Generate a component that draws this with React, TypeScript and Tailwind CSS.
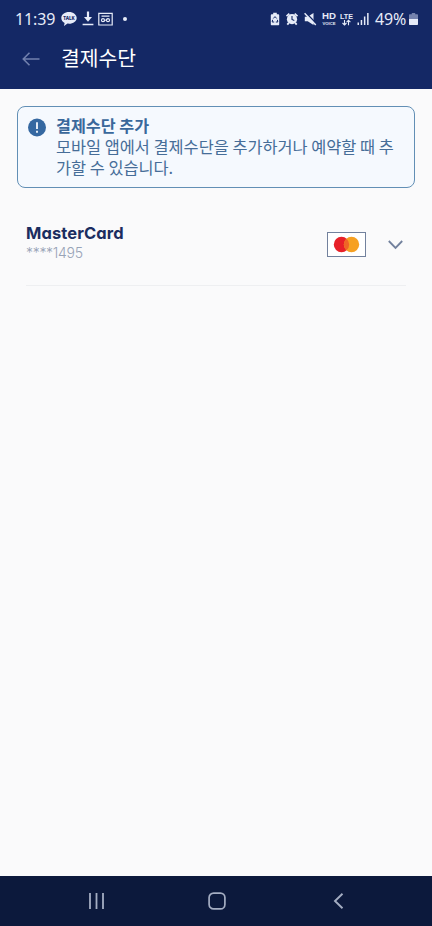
import type { ReactNode } from "react";
import { useState } from "react";

type Card = { id: string; brand: string; masked: string };

const CARDS: Card[] = [
  { id: "mc", brand: "MasterCard", masked: "****1495" },
];

function StatusBar() {
  return (
    <div className="flex h-[37px] items-center justify-between pl-[15px] pr-[14px] text-[#e6ebf8]">
      <div className="flex h-full items-center">
        <span className="w-[46px] whitespace-nowrap font-['Noto_Sans'] text-[16px] leading-none tracking-[-0.1px]">11:39</span>
        <svg className="h-[16px] w-4" viewBox="0 0 16 16" fill="currentColor">
          <path d="M8 1C3.700 1 .3 3.500.3 6.900c0 2.100 1.300 3.900 3.300 5L3 15l3.500-2.400c.5.1 1 .1 1.500.1 4.300 0 7.700-2.600 7.700-5.800S12.300 1 8 1Z" />
          <text x="8" y="8.900" textAnchor="middle" fontSize="5.500" fontWeight="800" fontFamily="Noto Sans" fill="#142865" textLength="11.500" lengthAdjust="spacingAndGlyphs">TALK</text>
        </svg>
        <svg className="ml-[5px] h-[15px] w-3" viewBox="0 0 12 15" fill="none" stroke="currentColor">
          <path d="M6 .5v8" strokeWidth="2.200" />
          <path d="M2 6 6 10.800 10 6Z" fill="currentColor" stroke="none" />
          <path d="M.6 13.500h10.800" strokeWidth="1.500" />
        </svg>
        <svg className="ml-[4px] h-[14px] w-[15px]" viewBox="0 0 15 14" fill="none" stroke="currentColor" strokeWidth="1.200">
          <path d="M.8 1.300h13.400v11.700H.8ZM3.500 4.200h8" />
          <circle cx="5" cy="8.200" r="1.500" />
          <circle cx="10" cy="8.200" r="1.500" />
          <path d="M5 9.700 9.500 6.900" strokeWidth="1" />
        </svg>
        <span className="ml-[10px] h-1 w-1 rounded-full bg-current" />
      </div>

      <div className="flex h-full items-center">
        <svg className="h-[14px] w-[10px]" viewBox="0 0 10 14">
          <path d="M3.200.8h3.600v1.500h1.500c.5 0 .9.400.9.900v9.100c0 .6-.4 1-.9 1H1.700c-.5 0-.9-.4-.9-1V3.200c0-.5.4-.9.900-.9h1.500Z" fill="currentColor" />
          <path d="M3.300 6.500 5 4.600l1.700 1.900M2.600 7.800 2.200 10h2M7.400 7.800l.4 2.200h-2" fill="none" stroke="#142865" strokeWidth="1" />
        </svg>
        <svg className="ml-[6px] h-[14px] w-3" viewBox="0 0 12 14">
          <circle cx="6" cy="7.200" r="5.100" fill="currentColor" />
          <path d="M.5 4.200 3.300 1.600M11.500 4.200 8.700 1.600M2.800 10.800l-1.500 1.800M9.200 10.800l1.500 1.800" stroke="currentColor" strokeWidth="1.800" />
          <path d="M6 4V7.400l2.300 1" fill="none" stroke="#142865" strokeWidth="1.100" />
        </svg>
        <svg className="ml-[6px] h-[14px] w-[13px]" viewBox="0 0 13 14">
          <path d="M.8 4.800h2.900L9.500 1v12L3.700 9.200H.8Z" fill="currentColor" />
          <path d="m1.400.4 11 11.400" stroke="#142865" strokeWidth="1.600" />
          <path d="m.6 1.300 11.200 11.600" stroke="currentColor" strokeWidth="1.500" />
        </svg>
        <svg className="ml-[5px] h-[15px] w-[14px] overflow-visible" viewBox="0 0 14 15" fill="currentColor" fontFamily="Liberation Sans" fontWeight="700">
          <text x="0" y="8.200" fontSize="8.500" textLength="14" lengthAdjust="spacingAndGlyphs">HD</text>
          <text x=".5" y="13.700" fontSize="4" textLength="13" lengthAdjust="spacingAndGlyphs">VOICE</text>
        </svg>
        <svg className="ml-1 h-[15px] w-[13px] overflow-visible" viewBox="0 0 13 15" fontFamily="Liberation Sans" fontWeight="700">
          <text x="0" y="7.500" fontSize="8" fill="currentColor" textLength="13" lengthAdjust="spacingAndGlyphs">LTE</text>
          <path d="M4.500 9v5M2.500 12l2 2 2-2M8.500 14.200V9.300M6.600 11.200l1.900-1.900 1.900 1.900" fill="none" stroke="currentColor" strokeWidth="1.100" />
        </svg>
        <svg className="ml-1 h-[13px] w-3" viewBox="0 0 12 13" fill="currentColor">
          <path d="M.5 10.500H2V13H.5ZM3.700 8h1.500v5H3.700ZM6.900 4.500h1.500V13H6.900ZM10.100 1h1.500V13h-1.500Z" />
        </svg>
        <span className="ml-[6px] w-[34px] whitespace-nowrap font-['Noto_Sans'] text-[16px] leading-none tracking-[-0.2px]">49%</span>
        <svg className="h-[14px] w-[9px]" viewBox="0 0 9 14">
          <path d="M2.800 1h3.400v1.200H8c.6 0 1 .4 1 1V7H0V3.200c0-.6.4-1 1-1h1.800Z" fill="#7482ad" />
          <path d="M0 7h9v5c0 .6-.4 1-1 1H1c-.6 0-1-.4-1-1Z" fill="currentColor" />
        </svg>
      </div>
    </div>
  );
}

function Header({ title }: { title: string }) {
  return (
    <header className="h-[89px] shrink-0 bg-[#142865]">
      <StatusBar />
      <div className="flex h-[42px] items-center pl-[22px]">
        <button aria-label="뒤로" className="mt-[2px]">
          <svg className="h-[14px] w-[18px]" viewBox="0 0 18 14" fill="none" stroke="#7180ad" strokeWidth="1.600">
            <path d="M17.500 7H1.300M7.500.8 1.300 7l6.200 6.200" />
          </svg>
        </button>
        <h1 className="-mt-px ml-[21px] font-['Noto_Sans_CJK_KR',sans-serif] text-[20.4px] leading-none text-white">{title}</h1>
      </div>
    </header>
  );
}

function Notice({ title, children }: { title: string; children: ReactNode }) {
  return (
    <section className="mx-[17px] mt-[17px] flex h-[82px] rounded-[8px] border border-[#628fb5] bg-[#f5f9fe] pl-[10px] pt-[8px]">
      <svg className="mt-[3px] h-[19px] w-[19px] shrink-0" viewBox="0 0 19 19">
        <circle cx="9" cy="9.500" r="9" fill="#3568a1" />
        <path d="M9 4.300v6.700M9 12.800v2" stroke="#f5f9fe" strokeWidth="1.800" />
      </svg>
      <div className="ml-[9px] w-[342px] break-all font-['Noto_Sans_CJK_KR',sans-serif] text-[16.35px] leading-[21px] text-[#466d98]">
        <h2 className="text-[16.2px] font-bold text-[#3a689b]">{title}</h2>
        <p>{children}</p>
      </div>
    </section>
  );
}

function CardRow({ card }: { card: Card }) {
  const [open, setOpen] = useState(false);
  return (
    <li className="mx-[26px] flex h-[70px] justify-between border-b border-[#eeeff1]">
      <div className="pt-[7px] font-['Inter',sans-serif] [font-feature-settings:'cv11']">
        <p className="text-[16.5px] font-bold leading-5 tracking-[0.1px] text-[#1b2d60]">{card.brand}</p>
        <p className="text-[14px] font-light leading-5 tracking-[-0.3px] text-[#98a3b7]">{card.masked}</p>
      </div>
      <div className="flex items-start pt-[16px]">
        <svg className="h-[25px] w-[39px]" viewBox="0 0 39 25">
          <rect x=".5" y=".5" width="38" height="24" fill="#fff" stroke="#72819d" />
          <circle cx="14.500" cy="12.500" r="7.700" fill="#e72028" />
          <circle cx="24.500" cy="12.500" r="7.700" fill="#f6a022" />
          <path d="M19.500 6.650a7.700 7.700 0 0 1 0 11.700 7.700 7.700 0 0 1 0-11.700Z" fill="#ef6527" />
        </svg>
        <button aria-label="카드 상세" onClick={() => setOpen(!open)} className="ml-[22px] mr-[3px] mt-[8px]">
          <svg className="h-[10px] w-[15px]" viewBox="0 0 15 10" fill="none" stroke="#72819d" strokeWidth="1.800">
            <path d="m.8 1 6.700 6.900L14.200 1" />
          </svg>
        </button>
      </div>
    </li>
  );
}

function NavBar() {
  return (
    <nav className="flex h-[50px] shrink-0 items-center justify-between bg-[#0c193c] px-[88px]">
      <svg className="h-[18px] w-[17px]" viewBox="0 0 17 18" stroke="#a4adc2" strokeWidth="1.800">
        <path d="M2 1v16M8.500 1v16M15 1v16" />
      </svg>
      <svg className="mr-[4px] h-[18px] w-[18px]" viewBox="0 0 18 18" fill="none" stroke="#a4adc2" strokeWidth="1.700">
        <rect x="1.100" y="1.100" width="15.800" height="15.800" rx="4.500" />
      </svg>
      <svg className="h-[18px] w-[11px]" viewBox="0 0 11 18" fill="none" stroke="#a4adc2" strokeWidth="1.900">
        <path d="M9.500 1.800 2 9l7.500 7.200" />
      </svg>
    </nav>
  );
}

export default function App() {
  return (
    <div className="flex h-[926px] w-[432px] flex-col overflow-hidden bg-[#fafafb]">
      <Header title="결제수단" />
      <main className="flex-1">
        <Notice title="결제수단 추가">
          모바일 앱에서 결제수단을 추가하거나 예약할 때 추가할 수 있습니다.
        </Notice>
        <ul className="mt-[28px]">
          {CARDS.map(c => <CardRow key={c.id} card={c} />)}
        </ul>
      </main>
      <NavBar />
    </div>
  );
}
